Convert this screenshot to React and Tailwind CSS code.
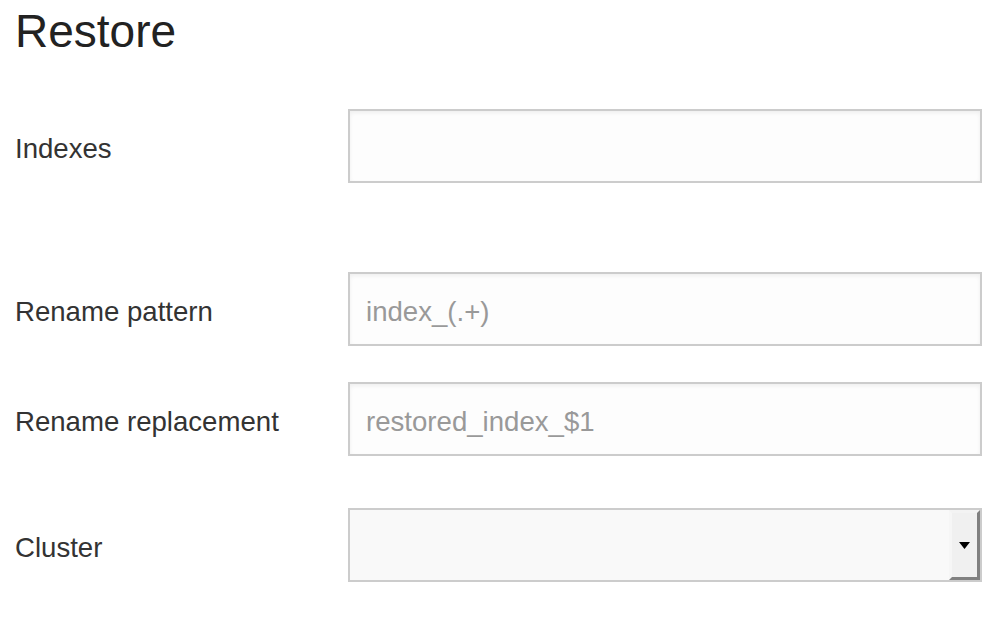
export default function App() {
  const font = { fontFamily: '"Liberation Sans", Arial, sans-serif' }

  const labelCls = 'w-[333px] pt-[5px] text-[27.6px] text-[#333333]'
  const fieldBox =
    'w-[634px] h-[74px] border-2 border-[#cccccc] bg-[#fdfdfd] shadow-[inset_0_2px_4px_rgba(0,0,0,0.06)] flex items-center pl-[16px] pt-[5px] text-[27.6px] text-[#999999]'

  return (
    <div className="w-[1008px] h-[626px] bg-white pl-[15px]" style={font}>
      {/* TITULO */}
      <h1 className="pt-[4px] text-[46px] leading-[54px] text-[#222222]">Restore</h1>

      {/* INDEXES */}
      <div className="flex items-center mt-[51px]">
        <label className={labelCls}>Indexes</label>
        <div className={fieldBox}></div>
      </div>

      {/* RENAME PATTERN */}
      <div className="flex items-center mt-[89px]">
        <label className={labelCls}>Rename pattern</label>
        <div className={fieldBox}>index_(.+)</div>
      </div>

      {/* RENAME REPLACEMENT */}
      <div className="flex items-center mt-[36px]">
        <label className={labelCls}>Rename replacement</label>
        <div className={fieldBox}>restored_index_$1</div>
      </div>

      {/* CLUSTER */}
      <div className="flex items-center mt-[52px]">
        <label className={labelCls}>Cluster</label>
        <div className="w-[634px] h-[74px] border-2 border-[#cccccc] bg-[#f9f9f9] flex justify-end">
          <div className="w-[31px] h-full bg-[#f0f0f0] border-[3px] border-t-[#f3f3f3] border-l-[#f6f6f6] border-r-[#808080] border-b-[#808080] flex items-center justify-center">
            <svg width="11" height="7" viewBox="0 0 11 7" className="mr-[1px]">
              <polygon points="0,0 11,0 5.5,7" fill="#000000" />
            </svg>
          </div>
        </div>
      </div>
    </div>
  )
}
